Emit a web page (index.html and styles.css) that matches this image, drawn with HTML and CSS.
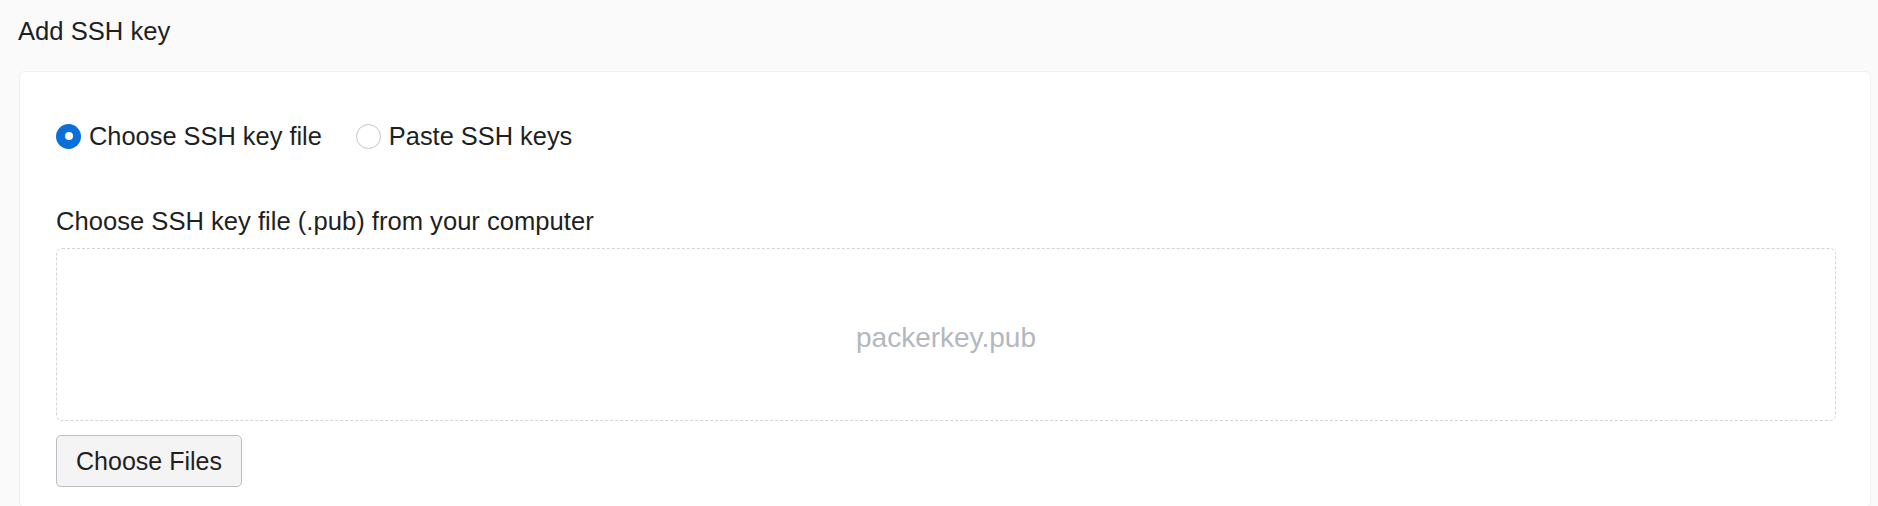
FILE: index.html
```html
<!DOCTYPE html>
<html lang="en">
<head>
<meta charset="utf-8">
<title>Add SSH key</title>
<link rel="stylesheet" href="styles.css">
</head>
<body>
<h1 class="page-title">Add SSH key</h1>
<section class="card">
  <div class="radio-row">
    <label class="radio-option">
      <input class="radio" type="radio" name="mode" checked>
      <span class="radio-text">Choose SSH key file</span>
    </label>
    <label class="radio-option">
      <input class="radio" type="radio" name="mode">
      <span class="radio-text">Paste SSH keys</span>
    </label>
  </div>
  <div class="field-label">Choose SSH key file (.pub) from your computer</div>
  <div class="dropzone">
    <span class="dropzone-text">packerkey.pub</span>
  </div>
  <button class="file-button" type="button">Choose Files</button>
</section>
</body>
</html>
```

FILE: styles.css
```css
* {
  box-sizing: border-box;
}

html, body {
  margin: 0;
  height: 100%;
}

body {
  background: #fafafa;
  padding: 0 7px 0 19px;
  font-family: "Liberation Sans", Arial, Helvetica, sans-serif;
  font-size: 25.6px;
  color: #1f1f1f;
  overflow: hidden;
}

.page-title {
  margin: 0;
  padding-top: 16px;
  font-size: 25.6px;
  font-weight: normal;
  line-height: 30px;
  margin-left: -1px;
}

.card {
  margin-top: 25px;
  background: #ffffff;
  border: 1px solid #f0f0f0;
  border-radius: 6px;
  padding: 49px 34px 20px 36px;
}

.radio-row {
  display: flex;
  align-items: center;
  gap: 34px;
  height: 30px;
}

.radio-option {
  display: flex;
  align-items: center;
  gap: 8px;
  line-height: 30px;
}

.radio-text {
  font-size: 25.4px;
}

.radio {
  appearance: none;
  -webkit-appearance: none;
  margin: 0;
  width: 25px;
  height: 25px;
  border-radius: 50%;
  border: 1px solid #bfc6ce;
  background: #ffffff;
  display: inline-block;
  position: relative;
}

.radio:checked {
  border: none;
  background: #0a6fd8;
}

.radio:checked::after {
  content: "";
  position: absolute;
  left: 50%;
  top: 50%;
  width: 8px;
  height: 8px;
  margin: -4px 0 0 -4px;
  border-radius: 50%;
  background: #ffffff;
}

.field-label {
  margin-top: 55px;
  line-height: 30px;
}

.dropzone {
  margin-top: 12px;
  height: 173px;
  border: 1px dashed #d2d4d7;
  border-radius: 6px;
  display: flex;
  align-items: center;
  justify-content: center;
  padding-top: 6px;
}

.dropzone-text {
  font-size: 28px;
  color: #b3b8bf;
  line-height: 32px;
}

.file-button {
  display: block;
  margin-top: 14px;
  width: 186px;
  height: 52px;
  padding: 0;
  white-space: nowrap;
  font-family: inherit;
  font-size: 25px;
  color: #1f1f1f;
  background: #f4f4f4;
  border: 1px solid #b9bec4;
  border-radius: 5px;
}
```
